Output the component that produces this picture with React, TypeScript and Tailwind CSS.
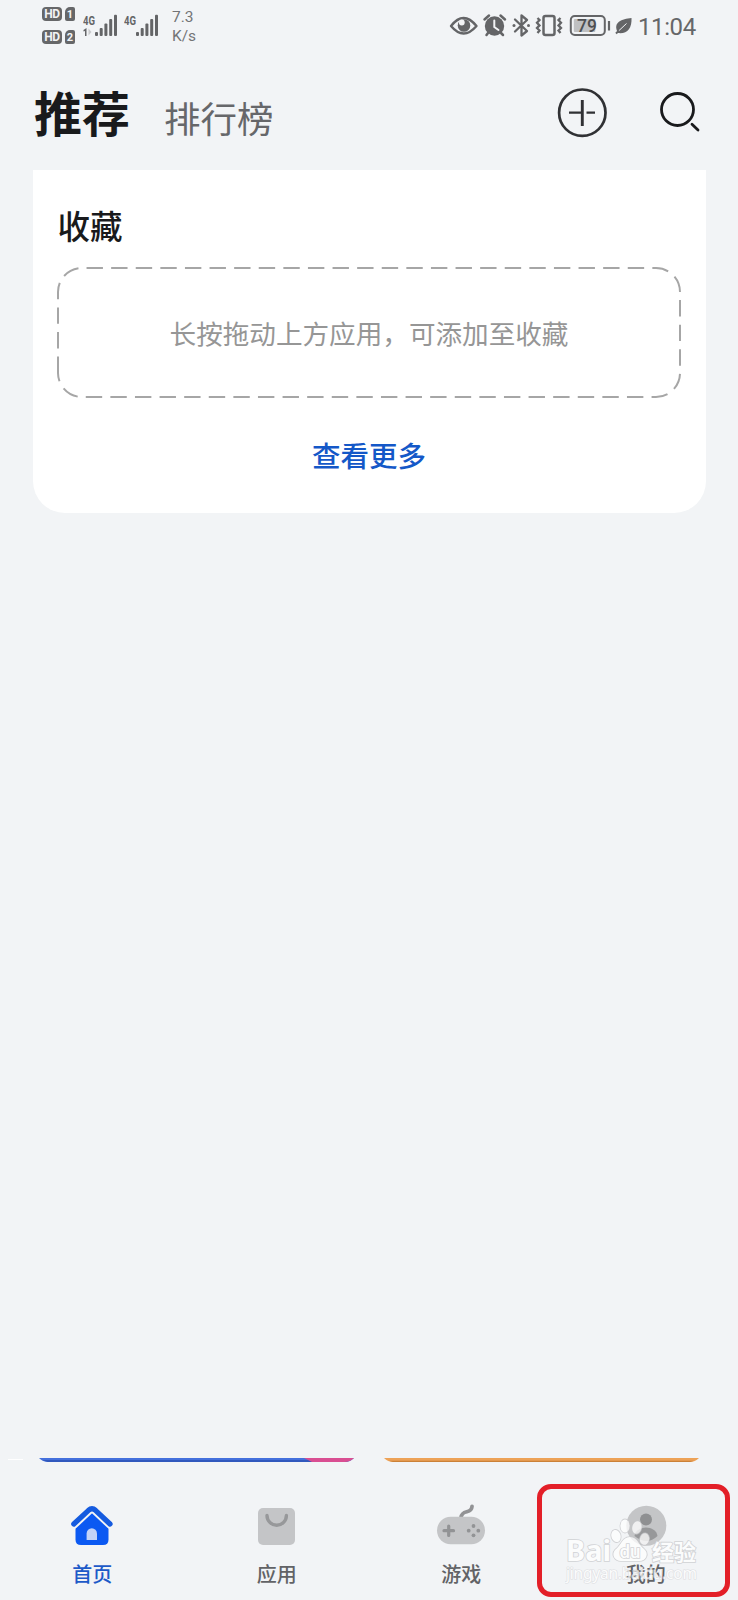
import React from "react";

function Hd({ n }: { n: number }) {
  return (
    <div className="flex h-[15px] gap-[3px]">
      <span className="flex h-[14px] w-5 items-center justify-center rounded-[4px] bg-[#666769] text-[12px] font-bold leading-none tracking-tight text-[#f2f3f5]">HD</span>
      <span className="flex h-[14px] w-[10px] items-center justify-center rounded-[2px] rounded-tl-[5px] bg-[#666769] text-[11px] font-bold leading-none text-[#f2f3f5]">{n}</span>
    </div>
  );
}

function Signal({ extra }: { extra?: boolean }) {
  return (
    <svg viewBox="0 -6 36 30" className="h-[30px] w-9" fill="#646567">
      <text x="0" y="10.5" fontSize="13" fontWeight="700" textLength="12" lengthAdjust="spacingAndGlyphs">4G</text>
      <rect x="12" y="18" width="3" height="4" rx="1" />
      <rect x="16.7" y="14" width="3" height="8" rx="1" />
      <rect x="21.4" y="9.5" width="3" height="12.5" rx="1" />
      <rect x="26.2" y="5" width="3" height="17" rx="1" />
      <rect x="31" y="0.7" width="3" height="21.3" rx="1" />
      {extra && <path d="M0.5 16 L3.5 14 V22 H2 V17 L0.5 17.5Z" />}
      {extra && <path d="M5.5 14.5 L8.5 18 L5.5 21.5Z" fill="#c9cacc" />}
    </svg>
  );
}

function StatusBar() {
  return (
    <div className="flex h-[54px] items-start pl-[42px] text-[#666769]">
      <div className="flex w-[41px] flex-col gap-2 pt-[7px]">
        <Hd n={1} />
        <Hd n={2} />
      </div>
      <div className="flex gap-[5px] pt-[8px]">
        <Signal extra />
        <Signal />
      </div>
      <div className="ml-[12px] w-[40px] whitespace-nowrap pt-[8px] text-[15.500px] leading-[18.500px] text-[#737476]">
        7.3
        <br />
        K/s
      </div>
      <svg viewBox="0 0 190 54" className="ml-[237px] h-[54px] w-[190px] shrink-0" fill="none" stroke="#646567">
        <path d="M2 26Q14.500 10 27.500 26Q14.500 41 2 26Z" strokeWidth="2.400" strokeLinejoin="round" />
        <circle cx="15" cy="25.500" r="6.300" fill="#646567" stroke="none" />
        <circle cx="12.800" cy="22.500" r="2.900" fill="#f2f3f5" stroke="none" />
        <circle cx="45.500" cy="26" r="9.700" fill="#646567" stroke="none" />
        <path d="M35.500 19.500L40 15.500M56 19.500L51.500 15.500M39 33L37.500 35M52 33L54 35" strokeWidth="2.500" strokeLinecap="round" />
        <path d="M45.300 20.500V27L49.500 30" stroke="#f2f3f5" strokeWidth="2" strokeLinecap="round" />
        <path d="M66 19.500L78 31L72.500 35.500V15.500L78 20L66 31.500" strokeWidth="2.300" strokeLinejoin="round" strokeLinecap="round" />
        <circle cx="65" cy="25.500" r="1.500" fill="#646567" stroke="none" />
        <circle cx="79.500" cy="25.500" r="1.500" fill="#646567" stroke="none" />
        <rect x="94.500" y="16" width="11" height="19" rx="2" strokeWidth="2.500" />
        <path d="M88.500 18L90.500 20L88 22.700L90.500 25.400L88 28L90.500 30.500L88.500 33M111.500 18L109.500 20L112 22.700L109.500 25.400L112 28L109.500 30.500L111.500 33" strokeWidth="2.300" />
        <rect x="121.800" y="16" width="34" height="19" rx="4" strokeWidth="2" />
        <rect x="124.800" y="19" width="21.500" height="13" rx="1" fill="#bfc0c2" stroke="none" />
        <path d="M160 21V30.500" strokeWidth="2.200" />
        <text x="138" y="32" textAnchor="middle" fontSize="17.500" fontWeight="500" fill="#4f5052" stroke="none">79</text>
        <path d="M182.500 18C173 19 163 22 169 33C178 34 183 29 182.500 18Z" fill="#646567" stroke="none" />
        <path d="M177.500 23.500L169 31.500" stroke="#f2f3f5" strokeWidth="1" />
        <path d="M170 30.500L167 33.500" strokeWidth="2" />
      </svg>
      <div className="ml-[-1px] whitespace-nowrap pt-[12px] text-[24px] leading-[30px] tracking-[-0.400px]">11:04</div>
    </div>
  );
}

function Header() {
  return (
    <header className="flex h-[116px] items-start pl-[34px]">
      <h1 className="mt-[28px] text-[48px] font-bold leading-[68px] text-[#191a1c]">推荐</h1>
      <span className="ml-[34px] mt-[42px] text-[36.500px] leading-[50px] text-[#66676a]">排行榜</span>
      <svg viewBox="0 0 150 54" className="ml-[282px] mt-[32px] h-[54px] w-[150px] shrink-0" fill="none" stroke="#303134">
        <circle cx="26.300" cy="26.700" r="23.200" strokeWidth="2.700" />
        <path d="M26.300 14V40" strokeWidth="2.900" />
        <path d="M13 26.700H26M30.500 26.700H39" strokeWidth="2.300" />
        <circle cx="121.500" cy="23.500" r="16" stroke="#191a1c" strokeWidth="2.800" />
        <path d="M136 38.300L142 44" stroke="#191a1c" strokeWidth="2.800" strokeLinecap="round" />
      </svg>
    </header>
  );
}

function Favorites() {
  return (
    <section className="mx-[32.500px] h-[343px] rounded-b-[32px] bg-white pt-[35px]">
      <h2 className="ml-[25px] text-[32.500px] font-medium leading-[46px] text-[#191a1c]">收藏</h2>
      <div className="relative ml-[24.500px] mt-[16px] flex h-[131px] w-[624px] items-center justify-center">
        <svg viewBox="0 0 624 131" className="absolute inset-0 h-full w-full" fill="none" stroke="#a6a6a6" strokeWidth="2">
          <path d="M1 106V25A24 24 0 0 1 25 1H599A24 24 0 0 1 623 25V106A24 24 0 0 1 599 130H25A24 24 0 0 1 1 106" strokeDasharray="16.400 8.200" />
        </svg>
        <span className="whitespace-nowrap pt-[4px] text-[26.600px] leading-[40px] text-[#969696]">长按拖动上方应用，可添加至收藏</span>
      </div>
      <div className="mt-[39px] text-center text-[28.500px] font-medium leading-[42px] text-[#1458c8]">查看更多</div>
    </section>
  );
}

function HomeIcon() {
  return (
    <svg viewBox="0 0 50 50" className="h-[50px] w-[50px]">
      <path d="M8.500 26L25 11L41.500 26V39.500Q41.500 45 36 45H14Q8.500 45 8.500 39.500Z" fill="#0b59f2" />
      <path d="M6.500 24.500L22 10Q25 7.500 28 10L43.500 24.500" fill="none" stroke="#f2f4f6" strokeWidth="9" strokeLinecap="round" />
      <path d="M6.800 24L21.500 10.300Q25 7.200 28.500 10.300L43 24" fill="none" stroke="#155bdf" strokeWidth="5.200" strokeLinecap="round" />
      <path d="M19.600 40V33.500A5.200 5.200 0 0 1 30 33.500V40Z" fill="#c3d3f7" />
    </svg>
  );
}

function BagIcon() {
  return (
    <svg viewBox="0 0 50 50" className="h-[50px] w-[50px]">
      <rect x="6" y="8" width="37" height="37" rx="5" fill="#c4c5c7" />
      <path d="M15 15.500A9.700 9.700 0 0 0 34.400 15.500" fill="none" stroke="#97989a" strokeWidth="3.400" strokeLinecap="round" />
    </svg>
  );
}

function GameIcon() {
  return (
    <svg viewBox="0 0 50 50" className="h-[50px] w-[50px]" fill="#929395">
      <path d="M25 17.500C26 9 35.500 14.500 36 6.500" fill="none" stroke="#929395" strokeWidth="3.800" strokeLinecap="round" />
      <rect x="1" y="16.800" width="48" height="27.500" rx="13.700" fill="#c4c5c7" />
      <path d="M12.700 26V35.500M8 30.700H17.500" stroke="#929395" strokeWidth="3.200" strokeLinecap="round" />
      <circle cx="37.500" cy="26" r="1.900" />
      <circle cx="37.500" cy="35.300" r="1.900" />
      <circle cx="32.700" cy="30.700" r="1.900" />
      <circle cx="42.300" cy="30.700" r="1.900" />
    </svg>
  );
}

function MineIcon() {
  return (
    <svg viewBox="0 0 50 50" className="h-[50px] w-[50px]">
      <circle cx="25.300" cy="25.700" r="20" fill="#c4c5c7" />
      <circle cx="25" cy="19.500" r="6" fill="#8f9092" />
      <path d="M13.500 36C15 24.500 35 24.500 36.500 36Q26 46 13.500 36Z" fill="#97989a" />
    </svg>
  );
}

function Watermark() {
  return (
    <svg viewBox="0 0 140 70" className="absolute left-[23px] top-[26px] h-[70px] w-[140px] opacity-75" fill="#ffffff" stroke="#c6c7ca" strokeWidth="1.600" paintOrder="stroke">
      <ellipse cx="51" cy="21" rx="4.600" ry="6.200" transform="rotate(-15 51 21)" />
      <ellipse cx="60" cy="11" rx="4.600" ry="6.600" />
      <ellipse cx="72" cy="12.500" rx="4.600" ry="6.400" transform="rotate(12 72 12)" />
      <ellipse cx="79.500" cy="24" rx="4.600" ry="5.800" transform="rotate(10 79 24)" />
      <path d="M65 22C57 22 56 31 50 35C46 40 50 46 56 46H74C82 46 84 38 79 34C74 31 73 22 65 22Z" />
      <text x="1" y="45.500" fontSize="29" fontWeight="700" textLength="45" lengthAdjust="spacingAndGlyphs" className="font-['Noto_Sans',sans-serif]">Bai</text>
      <text x="54.500" y="43" fontSize="19" fontWeight="500" textLength="21" lengthAdjust="spacingAndGlyphs">du</text>
      <text x="87" y="45" fontSize="22" fontWeight="700" textLength="44" lengthAdjust="spacingAndGlyphs">经验</text>
      <text x="1" y="63.500" fontSize="15.500" stroke="#d6d7da" strokeWidth="1.200" textLength="131" lengthAdjust="spacing" className="font-['Noto_Sans',sans-serif]">jingyan.baidu.com</text>
    </svg>
  );
}

function Tab({ label, active, children }: { label: string; active?: boolean; children: React.ReactNode }) {
  return (
    <div className="flex flex-col items-center pt-[38px]">
      {children}
      <span className={active ? "mt-[10px] text-[20px] font-medium leading-[30px] text-[#1d5ac8]" : "mt-[10px] text-[20px] font-medium leading-[30px] text-[#626366]"}>{label}</span>
    </div>
  );
}

export default function App() {
  return (
    <div className="flex h-[1600px] w-[738px] flex-col overflow-hidden bg-[#f2f4f6] font-[Roboto,'Noto_Sans_CJK_SC',sans-serif]">
      <StatusBar />
      <Header />
      <Favorites />
      <div className="flex-1" />
      <div className="flex h-1 pl-2">
        <div className="mr-4 mt-px h-px w-[15px] bg-white" />
        <svg viewBox="0 0 315 4" className="h-1 w-[315px]">
          <path d="M0 0H315Q311 4 306 4H9Q4 4 0 0Z" fill="#4470dc" />
          <path d="M3 2H312L306 4H9Z" fill="#3158bd" />
          <path d="M265 0H315Q311 4 306 4H273Z" fill="#d94e92" />
        </svg>
        <svg viewBox="0 0 315 4" className="ml-[30px] h-1 w-[315px]">
          <path d="M0 0H315Q311 4 306 4H9Q4 4 0 0Z" fill="#eda257" />
          <path d="M5 2.700H310L306 4H9Z" fill="#cb8138" />
        </svg>
      </div>
      <nav className="relative grid h-[138px] grid-cols-4">
        <Tab label="首页" active><HomeIcon /></Tab>
        <Tab label="应用"><BagIcon /></Tab>
        <Tab label="游戏"><GameIcon /></Tab>
        <Tab label="我的"><MineIcon /></Tab>
        <div className="absolute left-[537px] top-[22px] h-[113px] w-[193px] rounded-[14px] border-[5px] border-[#e31f28]">
          <Watermark />
        </div>
      </nav>
    </div>
  );
}
